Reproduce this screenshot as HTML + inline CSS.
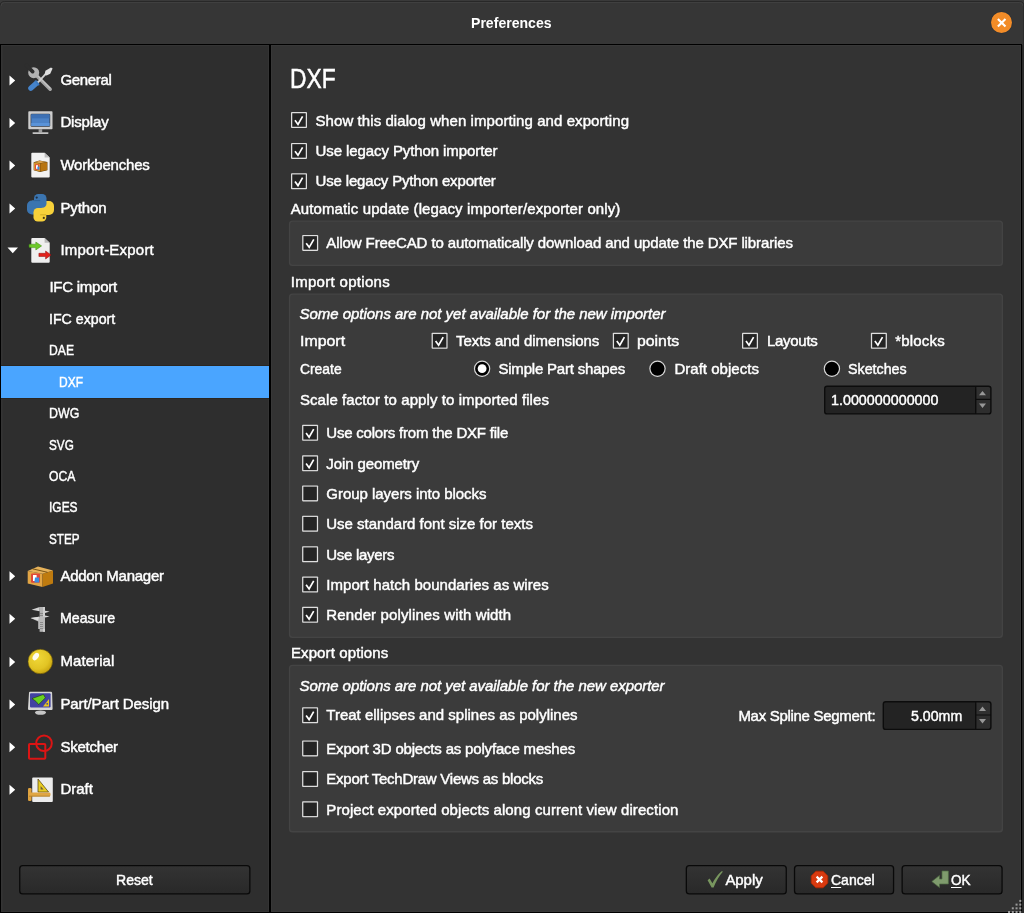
<!DOCTYPE html>
<html lang="en">
<head>
<meta charset="utf-8">
<title>Preferences</title>
<style>
*{box-sizing:border-box;margin:0;padding:0}
html,body{width:1024px;height:913px;overflow:hidden;background:#363636}
body{position:relative;font-family:"Liberation Sans",sans-serif;font-size:15px;color:#fff}
.abs{position:absolute}
#close{left:990.8px;top:11.7px;width:21.4px;height:21.4px;border-radius:50%;background:#f28c28;box-shadow:0 0 0 0.6px #2a3038}
#hline{left:0;top:44px;width:1022px;height:1px;background:#000}
#left{left:0;top:45px;width:269px;height:868px;background:#2e2e2e;border-left:1px solid #000;border-bottom:1px solid #000;box-shadow:inset 0 0 0 1px #343434}
#divider{left:269px;top:44px;width:2px;height:869px;background:#000}
#right{left:271px;top:45px;width:750px;height:868px;background:#333333;border-bottom:1px solid #000;box-shadow:inset 0 0 0 1px #383838}
#rline{left:1021px;top:44px;width:1px;height:869px;background:#000}
#sel{left:1px;top:366px;width:268px;height:32px;background:#4aa5ff;box-shadow:0 -1px 0 #2a2621,0 1px 0 #2a2621}
.t{position:absolute;white-space:nowrap;height:20px;line-height:20px;font-size:15px;transform-origin:0 50%;-webkit-text-stroke:0.45px #fff}
.t.h{height:34px;line-height:34px;font-size:27px;-webkit-text-stroke:0.5px #fff}
.t.b{font-weight:bold;-webkit-text-stroke:0}
.t u{text-decoration:underline;text-underline-offset:2px;text-decoration-thickness:1.3px}
.ic{position:absolute;left:24px;display:block}
#tx{position:absolute;left:0;top:0;width:1024px;height:913px;will-change:transform}
i{font-style:italic}
</style>
</head>
<body>
<svg class="abs" style="left:0;top:0" width="1024" height="8" viewBox="0 0 1024 8"><rect width="1024" height="8" fill="#3a3a3a"/><path d="M0 8V6Q0 1.5 4.5 1.5H1019.5Q1024 1.5 1024 6V8Z" fill="#363636"/><path d="M0 6Q0 1.5 4.5 1.5H1019.5Q1024 1.5 1024 6" fill="none" stroke="#282828" stroke-width="1"/><path d="M1 6Q1 2.6 4.5 2.6H1019.5Q1023 2.6 1023 6" fill="none" stroke="#424242" stroke-width="1"/></svg>
<div class="abs" id="close"><svg width="21.4" height="21.4" viewBox="0 0 21.4 21.4" style="display:block"><path d="M6.9 6.9L14.5 14.5M14.5 6.9L6.9 14.5" stroke="#fff" stroke-width="2.1" stroke-linecap="butt"/></svg></div>
<div class="abs" id="hline"></div>
<div class="abs" id="left"></div>
<div class="abs" id="divider"></div><div class="abs" style="left:2px;top:46px;width:1px;height:865px;background:#313131"></div>
<div class="abs" id="right"></div>
<div class="abs" id="rline"></div><div class="abs" style="left:1022px;top:45px;width:2px;height:868px;background:#2b2b2b"></div><div class="abs" style="left:1023px;top:4px;width:1px;height:41px;background:#2b2b2b"></div>
<div class="abs" id="sel"></div>
<svg class="abs" style="left:288px;top:664px" width="716" height="170" viewBox="0 0 716 170"><g transform="translate(0.9 0.8)"><rect width="714.1" height="167.6" rx="3.5" fill="#444444"/><rect x="1.3" y="1.3" width="711.5" height="165" rx="2.4" fill="#3b3b3b"/></g></svg>
<svg class="abs" style="left:288px;top:293px" width="716" height="346" viewBox="0 0 716 346"><g transform="translate(0.9 0.4)"><rect width="714.1" height="344.6" rx="3.5" fill="#444444"/><rect x="1.3" y="1.3" width="711.5" height="342" rx="2.4" fill="#3b3b3b"/></g></svg>
<svg class="abs" style="left:288px;top:220px" width="716" height="48" viewBox="0 0 716 48"><g transform="translate(0.9 0.4)"><rect width="714.1" height="45.7" rx="3.5" fill="#444444"/><rect x="1.3" y="1.3" width="711.5" height="43.1" rx="2.4" fill="#3b3b3b"/></g></svg>
<svg class="abs" style="left:291px;top:112px" width="18" height="18" viewBox="0 0 18 18"><g transform="translate(0 0)"><rect width="16" height="16" rx="0.8" fill="#dedede"/><rect x="1.25" y="1.25" width="13.5" height="13.5" fill="#242424"/><path d="M4 8.3L7 12.4L11.6 4.4" fill="none" stroke="#fff" stroke-width="1.7"/></g></svg>
<svg class="abs" style="left:291px;top:142px" width="18" height="18" viewBox="0 0 18 18"><g transform="translate(0 0.9)"><rect width="16" height="16" rx="0.8" fill="#dedede"/><rect x="1.25" y="1.25" width="13.5" height="13.5" fill="#242424"/><path d="M4 8.3L7 12.4L11.6 4.4" fill="none" stroke="#fff" stroke-width="1.7"/></g></svg>
<svg class="abs" style="left:291px;top:173px" width="18" height="18" viewBox="0 0 18 18"><g transform="translate(0 0.2)"><rect width="16" height="16" rx="0.8" fill="#dedede"/><rect x="1.25" y="1.25" width="13.5" height="13.5" fill="#242424"/><path d="M4 8.3L7 12.4L11.6 4.4" fill="none" stroke="#fff" stroke-width="1.7"/></g></svg>
<svg class="abs" style="left:302px;top:234px" width="18" height="18" viewBox="0 0 18 18"><g transform="translate(0.2 0.9)"><rect width="16" height="16" rx="0.8" fill="#dedede"/><rect x="1.25" y="1.25" width="13.5" height="13.5" fill="#242424"/><path d="M4 8.3L7 12.4L11.6 4.4" fill="none" stroke="#fff" stroke-width="1.7"/></g></svg>
<svg class="abs" style="left:431px;top:332px" width="18" height="18" viewBox="0 0 18 18"><g transform="translate(0.6 0.8)"><rect width="16" height="16" rx="0.8" fill="#dedede"/><rect x="1.25" y="1.25" width="13.5" height="13.5" fill="#242424"/><path d="M4 8.3L7 12.4L11.6 4.4" fill="none" stroke="#fff" stroke-width="1.7"/></g></svg>
<svg class="abs" style="left:612px;top:332px" width="18" height="18" viewBox="0 0 18 18"><g transform="translate(0.8 0.8)"><rect width="16" height="16" rx="0.8" fill="#dedede"/><rect x="1.25" y="1.25" width="13.5" height="13.5" fill="#242424"/><path d="M4 8.3L7 12.4L11.6 4.4" fill="none" stroke="#fff" stroke-width="1.7"/></g></svg>
<svg class="abs" style="left:742px;top:332px" width="18" height="18" viewBox="0 0 18 18"><g transform="translate(0 0.8)"><rect width="16" height="16" rx="0.8" fill="#dedede"/><rect x="1.25" y="1.25" width="13.5" height="13.5" fill="#242424"/><path d="M4 8.3L7 12.4L11.6 4.4" fill="none" stroke="#fff" stroke-width="1.7"/></g></svg>
<svg class="abs" style="left:870px;top:332px" width="18" height="18" viewBox="0 0 18 18"><g transform="translate(0.9 0.8)"><rect width="16" height="16" rx="0.8" fill="#dedede"/><rect x="1.25" y="1.25" width="13.5" height="13.5" fill="#242424"/><path d="M4 8.3L7 12.4L11.6 4.4" fill="none" stroke="#fff" stroke-width="1.7"/></g></svg>
<svg class="abs" style="left:302px;top:424px" width="18" height="18" viewBox="0 0 18 18"><g transform="translate(0.1 0.8)"><rect width="16" height="16" rx="0.8" fill="#dedede"/><rect x="1.25" y="1.25" width="13.5" height="13.5" fill="#242424"/><path d="M4 8.3L7 12.4L11.6 4.4" fill="none" stroke="#fff" stroke-width="1.7"/></g></svg>
<svg class="abs" style="left:302px;top:455px" width="18" height="18" viewBox="0 0 18 18"><g transform="translate(0.1 0.3)"><rect width="16" height="16" rx="0.8" fill="#dedede"/><rect x="1.25" y="1.25" width="13.5" height="13.5" fill="#242424"/><path d="M4 8.3L7 12.4L11.6 4.4" fill="none" stroke="#fff" stroke-width="1.7"/></g></svg>
<svg class="abs" style="left:302px;top:485px" width="18" height="18" viewBox="0 0 18 18"><g transform="translate(0.1 0.4)"><rect width="16" height="16" rx="0.8" fill="#dedede"/><rect x="1.25" y="1.25" width="13.5" height="13.5" fill="#242424"/></g></svg>
<svg class="abs" style="left:302px;top:515px" width="18" height="18" viewBox="0 0 18 18"><g transform="translate(0.1 0.7)"><rect width="16" height="16" rx="0.8" fill="#dedede"/><rect x="1.25" y="1.25" width="13.5" height="13.5" fill="#242424"/></g></svg>
<svg class="abs" style="left:302px;top:546px" width="18" height="18" viewBox="0 0 18 18"><g transform="translate(0.1 0.2)"><rect width="16" height="16" rx="0.8" fill="#dedede"/><rect x="1.25" y="1.25" width="13.5" height="13.5" fill="#242424"/></g></svg>
<svg class="abs" style="left:302px;top:576px" width="18" height="18" viewBox="0 0 18 18"><g transform="translate(0.1 0.5)"><rect width="16" height="16" rx="0.8" fill="#dedede"/><rect x="1.25" y="1.25" width="13.5" height="13.5" fill="#242424"/><path d="M4 8.3L7 12.4L11.6 4.4" fill="none" stroke="#fff" stroke-width="1.7"/></g></svg>
<svg class="abs" style="left:302px;top:606px" width="18" height="18" viewBox="0 0 18 18"><g transform="translate(0.1 0.8)"><rect width="16" height="16" rx="0.8" fill="#dedede"/><rect x="1.25" y="1.25" width="13.5" height="13.5" fill="#242424"/><path d="M4 8.3L7 12.4L11.6 4.4" fill="none" stroke="#fff" stroke-width="1.7"/></g></svg>
<svg class="abs" style="left:302px;top:707px" width="18" height="18" viewBox="0 0 18 18"><g transform="translate(0.1 0.2)"><rect width="16" height="16" rx="0.8" fill="#dedede"/><rect x="1.25" y="1.25" width="13.5" height="13.5" fill="#242424"/><path d="M4 8.3L7 12.4L11.6 4.4" fill="none" stroke="#fff" stroke-width="1.7"/></g></svg>
<svg class="abs" style="left:302px;top:740px" width="18" height="18" viewBox="0 0 18 18"><g transform="translate(0.1 0.4)"><rect width="16" height="16" rx="0.8" fill="#dedede"/><rect x="1.25" y="1.25" width="13.5" height="13.5" fill="#242424"/></g></svg>
<svg class="abs" style="left:302px;top:771px" width="18" height="18" viewBox="0 0 18 18"><g transform="translate(0.1 0)"><rect width="16" height="16" rx="0.8" fill="#dedede"/><rect x="1.25" y="1.25" width="13.5" height="13.5" fill="#242424"/></g></svg>
<svg class="abs" style="left:302px;top:801px" width="18" height="18" viewBox="0 0 18 18"><g transform="translate(0.1 0.3)"><rect width="16" height="16" rx="0.8" fill="#dedede"/><rect x="1.25" y="1.25" width="13.5" height="13.5" fill="#242424"/></g></svg>
<svg class="abs" style="left:473px;top:359px" width="19" height="19" viewBox="0 0 19 19"><circle cx="9.1" cy="9.7" r="8.2" fill="#d8d8d8"/><circle cx="9.1" cy="9.7" r="7" fill="#000"/><circle cx="9.1" cy="9.7" r="4.4" fill="#fff"/></svg>
<svg class="abs" style="left:648px;top:359px" width="19" height="19" viewBox="0 0 19 19"><circle cx="9.5" cy="9.7" r="8.2" fill="#d8d8d8"/><circle cx="9.5" cy="9.7" r="7" fill="#000"/></svg>
<svg class="abs" style="left:822px;top:359px" width="19" height="19" viewBox="0 0 19 19"><circle cx="9.9" cy="9.7" r="8.2" fill="#d8d8d8"/><circle cx="9.9" cy="9.7" r="7" fill="#000"/></svg>
<svg class="abs" style="left:824px;top:385px" width="169" height="31" viewBox="0 0 169 31"><g transform="translate(0 0.5)"><rect x="0" y="0" width="167.6" height="29.1" rx="3.2" fill="#0c0c0c"/><path d="M3 1.4H151.1V27.7H3Q1.4 27.7 1.4 26.1V3Q1.4 1.4 3 1.4Z" fill="#232323"/><path d="M152.4 1.4H164.6Q166.2 1.4 166.2 3V13.3H152.4Z" fill="#303030"/><path d="M152.4 14.5H166.2V26.1Q166.2 27.7 164.6 27.7H152.4Z" fill="#2e2e2e"/><path d="M155 9.8L158.5 5.5L162 9.8Z M155 18L158.5 22.4L162 18Z" fill="#979797"/></g></svg>
<svg class="abs" style="left:882px;top:701px" width="111" height="31" viewBox="0 0 111 31"><g transform="translate(0.6 0.1)"><rect x="0" y="0" width="109" height="29" rx="3.2" fill="#0c0c0c"/><path d="M3 1.4H92.5V27.6H3Q1.4 27.6 1.4 26V3Q1.4 1.4 3 1.4Z" fill="#232323"/><path d="M93.8 1.4H106Q107.6 1.4 107.6 3V13.3H93.8Z" fill="#303030"/><path d="M93.8 14.5H107.6V26Q107.6 27.6 106 27.6H93.8Z" fill="#2e2e2e"/><path d="M96.4 9.8L99.9 5.5L103.4 9.8Z M96.4 18L99.9 22.4L103.4 18Z" fill="#979797"/></g></svg>
<svg width="0" height="0" style="position:absolute"><defs><linearGradient id="bg" x1="0" y1="0" x2="0" y2="1"><stop offset="0" stop-color="#333333"/><stop offset="1" stop-color="#292929"/></linearGradient></defs></svg>
<svg class="abs" style="left:19px;top:865px" width="233" height="31" viewBox="0 0 233 31"><g transform="translate(0.1 0)"><rect x="0" y="0" width="231.4" height="29.6" rx="3.6" fill="#090909"/><rect x="1.3" y="1.3" width="228.8" height="27" rx="2.4" fill="url(#bg)"/></g></svg>
<svg class="abs" style="left:685px;top:865px" width="103" height="31" viewBox="0 0 103 31"><g transform="translate(0.7 0)"><rect x="0" y="0" width="101.2" height="29.6" rx="3.6" fill="#090909"/><rect x="1.3" y="1.3" width="98.6" height="27" rx="2.4" fill="url(#bg)"/></g></svg>
<svg class="abs" style="left:793px;top:865px" width="103" height="31" viewBox="0 0 103 31"><g transform="translate(0.9 0)"><rect x="0" y="0" width="100.3" height="29.6" rx="3.6" fill="#090909"/><rect x="1.3" y="1.3" width="97.7" height="27" rx="2.4" fill="url(#bg)"/></g></svg>
<svg class="abs" style="left:901px;top:865px" width="103" height="31" viewBox="0 0 103 31"><g transform="translate(0.5 0)"><rect x="0" y="0" width="101.2" height="29.6" rx="3.6" fill="#090909"/><rect x="1.3" y="1.3" width="98.6" height="27" rx="2.4" fill="url(#bg)"/></g></svg>
<svg class="abs" style="left:0;top:0" width="24" height="913" viewBox="0 0 24 913"><path d="M9.5 75.4L15.2 80.4L9.5 85.4Z M9.5 117.9L15.2 122.9L9.5 127.9Z M9.5 160.5L15.2 165.5L9.5 170.5Z M9.5 203.4L15.2 208.4L9.5 213.4Z M9.5 571.3L15.2 576.3L9.5 581.3Z M9.5 613.8L15.2 618.8L9.5 623.8Z M9.5 656.9L15.2 661.9L9.5 666.9Z M9.5 699.5L15.2 704.5L9.5 709.5Z M9.5 742.3L15.2 747.3L9.5 752.3Z M9.5 784.8L15.2 789.8L9.5 794.8Z M7.5 247.4H18L12.75 253.3Z" fill="#fff"/></svg>
<svg class="abs" style="left:706px;top:869px" width="20" height="20" viewBox="0 0 20 20"><path d="M1.6 11.2L3.6 9.6L6.4 14.2Q10.5 6.5 15.6 2.2L17 2.6Q11.5 9 7.6 18.4L5.6 18.6Z" fill="#78965f"/></svg>
<svg class="abs" style="left:810px;top:870px" width="19" height="19" viewBox="0 0 19 19"><path d="M5.9 1.2H13.1L17.8 5.9V13.1L13.1 17.8H5.9L1.2 13.1V5.9Z" fill="#d83a10" stroke="#b02800" stroke-width="0.8"/><path d="M6.6 6.6L12.4 12.4M12.4 6.6L6.6 12.4" stroke="#fff" stroke-width="2.2"/></svg>
<svg class="abs" style="left:930px;top:869px" width="20" height="20" viewBox="0 0 20 20"><path d="M12 2H18.4V15H9.5V18.6L1.8 12.5L9.5 6.4V10H12Z" fill="#7f9b6d" stroke="#4f6a44" stroke-width="0.7"/></svg>
<svg class="abs" style="left:1006px;top:897px" width="16" height="16" viewBox="0 0 16 16"><rect x="13.3" y="14" width="2" height="2" fill="#9a9a9a"/><rect x="9.55" y="14" width="2" height="2" fill="#9a9a9a"/><rect x="5.8" y="14" width="2" height="2" fill="#9a9a9a"/><rect x="2.05" y="14" width="2" height="2" fill="#9a9a9a"/><rect x="13.3" y="10.3" width="2" height="2" fill="#9a9a9a"/><rect x="9.55" y="10.3" width="2" height="2" fill="#9a9a9a"/><rect x="5.8" y="10.3" width="2" height="2" fill="#9a9a9a"/><rect x="13.3" y="6.6" width="2" height="2" fill="#9a9a9a"/><rect x="9.55" y="6.6" width="2" height="2" fill="#9a9a9a"/><rect x="13.3" y="2.9" width="2" height="2" fill="#9a9a9a"/></svg>
<svg class="ic" style="top:62px" width="32" height="34" viewBox="0 0 32 34"><path d="M11.4 12.4L26.2 27.2" stroke="#a6a6a6" stroke-width="3.5" stroke-linecap="round"/><path d="M12.4 12.6L26 26.2" stroke="#c6c6c6" stroke-width="1.1" stroke-linecap="round"/><circle cx="9.7" cy="10.7" r="5.5" fill="#b2b2b2"/><path d="M8.6 9.6L2.5 3.5" stroke="#2e2e2e" stroke-width="3.7" stroke-linecap="round"/><path d="M6.8 26.2L12.4 21.2" stroke="#4584cc" stroke-width="5.2" stroke-linecap="round"/><path d="M11 18.6L15.2 23.2" stroke="#3a78c0" stroke-width="1.4"/><path d="M14 20.4L22 11.6" stroke="#d0d0d0" stroke-width="1.9"/><path d="M20.6 12.8L21.4 8.8L27 5.4L28.6 6.4L26.2 11.8L22.6 13.6Z" fill="#dedede"/></svg>
<svg class="ic" style="top:105px" width="32" height="34" viewBox="0 0 32 34"><rect x="4.3" y="6.3" width="24.2" height="17.9" rx="0.8" fill="#cdcdcd"/><rect x="6.6" y="8.7" width="19.6" height="13" rx="1.2" fill="#303a48"/><rect x="7.3" y="9.4" width="18.2" height="11.6" fill="#4c82c6"/><rect x="7.3" y="9.4" width="18.2" height="4" fill="#3d70b4"/><rect x="7.3" y="18" width="18.2" height="3" fill="#5a93d8"/><rect x="14.6" y="24.2" width="3.6" height="3.2" fill="#9e9e9e"/><rect x="8.4" y="27.2" width="16.2" height="1.7" rx="0.8" fill="#c4c4c4"/></svg>
<svg class="ic" style="top:147px" width="32" height="34" viewBox="0 0 32 34"><path d="M8.3 5.8H20.6L25.7 10.6V29.5Q25.7 30.5 24.7 30.5H8.3Q7.3 30.5 7.3 29.5V6.8Q7.3 5.8 8.3 5.8Z" fill="#f2f2f2"/><path d="M20.6 5.8V10.6H25.7Z" fill="#bdbdbd"/><path d="M9.7 15.2L15.5 13.4L23.4 15V23.2L16 25L9.7 23.2Z" fill="#5a3a08"/><path d="M9.9 15.4L16 16.6V24.6L9.9 23Z" fill="#d8962e"/><path d="M16.3 16.6L23.1 15.2V22.9L16.3 24.6Z" fill="#b87510"/><path d="M10.3 15.2L15.5 13.8L22.6 15L16.1 16.3Z" fill="#d9a04a"/><rect x="11" y="17.4" width="4.2" height="5.4" fill="#e04b3a"/><rect x="12" y="18.2" width="2" height="3.6" fill="#fff"/><rect x="13.4" y="19.6" width="2" height="3" fill="#3a8ee0"/></svg>
<svg class="ic" style="top:190px" width="32" height="34" viewBox="0 0 32 34"><rect x="3" y="10.5" width="13.5" height="14" rx="5" fill="#3b75b0"/><rect x="17" y="11" width="13" height="14" rx="5" fill="#f7d13a"/><rect x="9.5" y="18" width="12.8" height="13.5" rx="4.3" fill="#f7d13a"/><rect x="14" y="18" width="11" height="7" fill="#f7d13a"/><rect x="10" y="4" width="12.5" height="13.7" rx="4.3" fill="#3b75b0"/><rect x="8" y="10.5" width="10" height="7.2" fill="#3b75b0"/><circle cx="12.7" cy="7.6" r="1.1" fill="#1d2f44"/><circle cx="19.8" cy="27.9" r="1.1" fill="#4a3a10"/><path d="M10.2 10.6H16.2" stroke="#2b5c90" stroke-width="0.8"/><path d="M16.2 24.8H22.2" stroke="#c9a21c" stroke-width="0.8"/></svg>
<svg class="ic" style="top:233px" width="32" height="34" viewBox="0 0 32 34"><path d="M8.3 5H20.6L25.7 9.8V28.8Q25.7 29.8 24.7 29.8H8.3Q7.3 29.8 7.3 28.8V6Q7.3 5 8.3 5Z" fill="#efefef"/><path d="M20.6 5V9.8H25.7Z" fill="#b8b8b8"/><path d="M5.4 11.2H11.8V9L17.6 12.9L11.8 17V14.6H5.4Q4.6 12.9 5.4 11.2Z" fill="#6cc828" stroke="#3f8a12" stroke-width="0.5"/><path d="M14.9 20.3H21.6V18L27.1 21.9L21.6 26V23.5H14.9Z" fill="#e2211c" stroke="#8f0f0c" stroke-width="0.5"/></svg>
<svg class="ic" style="top:559px" width="32" height="34" viewBox="0 0 32 34"><path d="M3.7 12L18.5 14.8V28L3.7 24.5Z" fill="#e2a545"/><path d="M18.5 14.8L29 11.6V24.4L18.5 28Z" fill="#bf7b0f"/><path d="M3.7 12L14 7.5L29 11.6L18.5 14.8Z" fill="#e6b25a"/><path d="M8.5 9.8L23.5 13.3" stroke="#6b4a10" stroke-width="0.9"/><rect x="7" y="14.4" width="9" height="9.4" rx="1" fill="#e0483a"/><rect x="9" y="16" width="3.6" height="6" fill="#fff"/><path d="M11 18.4H15.2V23.6H10.4Z" fill="#3a8ee0"/></svg>
<svg class="ic" style="top:602px" width="32" height="34" viewBox="0 0 32 34"><rect x="15.6" y="5" width="5.4" height="24.8" fill="#b4b4b4"/><rect x="19" y="5" width="2" height="24.8" fill="#cfcfcf"/><path d="M15.6 5L7.6 7.8L15.6 9.2Z" fill="#d4d4d4"/><path d="M15 14.8L6.6 16L14.2 19.4V27H21V14.8Z" fill="#b9b9b9"/><path d="M15 14.8L6.6 16L14.2 18.4Z" fill="#dedede"/><path d="M21 8.8L25.6 9.6L21 11Z M21 13.6L25.6 14.4L21 15.6Z" fill="#d4d4d4"/><path d="M16 11.5H19M16 13.5H19M16 20.5H19M16 22.5H19M16 24.5H19M16 26.5H19" stroke="#777" stroke-width="0.7"/></svg>
<svg class="ic" style="top:645px" width="32" height="34" viewBox="0 0 32 34"><defs><radialGradient id="gm" cx="0.4" cy="0.35" r="0.75"><stop offset="0" stop-color="#f0d838"/><stop offset="0.6" stop-color="#e2c424"/><stop offset="1" stop-color="#c09a08"/></radialGradient></defs><circle cx="16.3" cy="16.5" r="12.3" fill="url(#gm)" stroke="#5a4a08" stroke-width="0.6"/><ellipse cx="11.8" cy="11.6" rx="2.6" ry="4.2" transform="rotate(35 11.8 11.6)" fill="#fff" opacity="0.92"/></svg>
<svg class="ic" style="top:687px" width="32" height="34" viewBox="0 0 32 34"><ellipse cx="16.5" cy="25.6" rx="5.6" ry="2.2" fill="#c6c6c6"/><path d="M6 4.7H27Q28 4.7 28.1 5.7L28.6 21.8Q28.6 23 27.6 23H5Q4 23 4 21.8L5 5.7Q5 4.7 6 4.7Z" fill="#d6d6d6"/><rect x="6" y="6.2" width="20.6" height="14.4" rx="1" fill="#4242a2"/><path d="M8 11.6L19.4 7.4L21.4 10.8L14.6 17.6L12 14.4Z" fill="#6ad220" stroke="#1c3a08" stroke-width="0.6"/><path d="M25 12V19.5H19Z" fill="#e8c41e"/><circle cx="23.2" cy="16.8" r="0.9" fill="#4242a2"/></svg>
<svg class="ic" style="top:730px" width="32" height="34" viewBox="0 0 32 34"><rect x="5" y="14" width="16.3" height="14.8" rx="0.8" fill="none" stroke="#dc1414" stroke-width="2"/><circle cx="20" cy="13.2" r="7.8" fill="none" stroke="#dc1414" stroke-width="2"/></svg>
<svg class="ic" style="top:773px" width="32" height="34" viewBox="0 0 32 34"><rect x="8.2" y="4.5" width="20.6" height="24.5" rx="1" fill="#ececec"/><path d="M14 6V19H24.6Z" fill="#e8cc22" stroke="#4a3a08" stroke-width="0.7"/><path d="M16.6 13V16.6H19.6Z" fill="#6b5a3a"/><rect x="4" y="15" width="3.6" height="13" rx="1.2" fill="#dfa23e"/><rect x="4.5" y="19.6" width="22" height="3.8" rx="1.4" fill="#e0a644"/><path d="M5 23.2H26" stroke="#9a6a18" stroke-width="0.6"/></svg>

<div id="tx">
<div class="t b" style="left:470.65px;top:13.00px;transform:scaleX(0.9382);">Preferences</div>
<div class="t" style="left:60.40px;top:70.00px;letter-spacing:-0.311px;">General</div>
<div class="t" style="left:60.40px;top:112.00px;letter-spacing:-0.155px;">Display</div>
<div class="t" style="left:60.40px;top:155.00px;letter-spacing:-0.203px;">Workbenches</div>
<div class="t" style="left:60.40px;top:198.00px;letter-spacing:-0.084px;">Python</div>
<div class="t" style="left:60.40px;top:240.00px;letter-spacing:0.211px;">Import-Export</div>
<div class="t" style="left:49.40px;top:277.00px;letter-spacing:-0.242px;">IFC import</div>
<div class="t" style="left:49.40px;top:309.00px;transform:scaleX(0.9453);">IFC export</div>
<div class="t" style="left:49.40px;top:340.00px;transform:scaleX(0.8105);">DAE</div>
<div class="t" style="left:58.60px;top:372.00px;transform:scaleX(0.8000);">DXF</div>
<div class="t" style="left:49.40px;top:403.00px;transform:scaleX(0.8262);">DWG</div>
<div class="t" style="left:49.40px;top:435.00px;transform:scaleX(0.7826);">SVG</div>
<div class="t" style="left:49.40px;top:466.00px;transform:scaleX(0.8119);">OCA</div>
<div class="t" style="left:49.40px;top:497.00px;transform:scaleX(0.7976);">IGES</div>
<div class="t" style="left:49.40px;top:529.00px;transform:scaleX(0.7809);">STEP</div>
<div class="t" style="left:60.40px;top:566.00px;letter-spacing:-0.265px;">Addon Manager</div>
<div class="t" style="left:60.40px;top:608.00px;transform:scaleX(0.9459);">Measure</div>
<div class="t" style="left:60.40px;top:651.00px;letter-spacing:0.093px;">Material</div>
<div class="t" style="left:60.40px;top:694.00px;letter-spacing:-0.090px;">Part/Part Design</div>
<div class="t" style="left:60.40px;top:737.00px;letter-spacing:-0.225px;">Sketcher</div>
<div class="t" style="left:60.40px;top:779.00px;letter-spacing:0.017px;">Draft</div>
<div class="t" style="left:116.40px;top:870.00px;transform:scaleX(0.9365);">Reset</div>
<div class="t h" style="left:289.90px;top:62.00px;transform:scaleX(0.8444);">DXF</div>
<div class="t" style="left:315.50px;top:111.00px;letter-spacing:0.075px;">Show this dialog when importing and exporting</div>
<div class="t" style="left:315.50px;top:141.00px;letter-spacing:-0.090px;">Use legacy Python importer</div>
<div class="t" style="left:315.50px;top:171.00px;letter-spacing:-0.156px;">Use legacy Python exporter</div>
<div class="t" style="left:290.70px;top:199.00px;letter-spacing:0.114px;">Automatic update (legacy importer/exporter only)</div>
<div class="t" style="left:326.30px;top:233.00px;letter-spacing:-0.115px;">Allow FreeCAD to automatically download and update the DXF libraries</div>
<div class="t" style="left:290.70px;top:272.00px;letter-spacing:0.304px;">Import options</div>
<div class="t" style="left:299.50px;top:304.00px;letter-spacing:-0.031px;"><i>Some options are not yet available for the new importer</i></div>
<div class="t" style="left:299.90px;top:331.00px;transform:scaleX(1.0608);">Import</div>
<div class="t" style="left:456.00px;top:331.00px;letter-spacing:-0.048px;">Texts and dimensions</div>
<div class="t" style="left:636.80px;top:331.00px;transform:scaleX(1.0542);">points</div>
<div class="t" style="left:766.90px;top:331.00px;letter-spacing:-0.264px;">Layouts</div>
<div class="t" style="left:895.20px;top:331.00px;letter-spacing:0.206px;">*blocks</div>
<div class="t" style="left:299.90px;top:359.00px;transform:scaleX(0.9238);">Create</div>
<div class="t" style="left:498.40px;top:359.00px;letter-spacing:-0.193px;">Simple Part shapes</div>
<div class="t" style="left:674.40px;top:359.00px;letter-spacing:0.031px;">Draft objects</div>
<div class="t" style="left:848.30px;top:359.00px;transform:scaleX(0.9513);">Sketches</div>
<div class="t" style="left:299.90px;top:390.00px;letter-spacing:0.080px;">Scale factor to apply to imported files</div>
<div class="t" style="left:831.40px;top:390.00px;transform:scaleX(0.9545);">1.000000000000</div>
<div class="t" style="left:326.30px;top:423.00px;letter-spacing:-0.206px;">Use colors from the DXF file</div>
<div class="t" style="left:326.30px;top:454.00px;letter-spacing:-0.109px;">Join geometry</div>
<div class="t" style="left:326.30px;top:484.00px;letter-spacing:-0.029px;">Group layers into blocks</div>
<div class="t" style="left:326.30px;top:514.00px;letter-spacing:-0.005px;">Use standard font size for texts</div>
<div class="t" style="left:326.30px;top:545.00px;letter-spacing:-0.286px;">Use layers</div>
<div class="t" style="left:326.30px;top:575.00px;letter-spacing:0.045px;">Import hatch boundaries as wires</div>
<div class="t" style="left:326.30px;top:605.00px;letter-spacing:0.120px;">Render polylines with width</div>
<div class="t" style="left:290.90px;top:643.00px;letter-spacing:0.115px;">Export options</div>
<div class="t" style="left:299.50px;top:676.00px;letter-spacing:-0.049px;"><i>Some options are not yet available for the new exporter</i></div>
<div class="t" style="left:326.30px;top:705.00px;letter-spacing:-0.001px;">Treat ellipses and splines as polylines</div>
<div class="t" style="left:738.40px;top:706.00px;letter-spacing:-0.299px;">Max Spline Segment:</div>
<div class="t" style="left:911.40px;top:706.00px;transform:scaleX(0.9449);">5.00mm</div>
<div class="t" style="left:326.30px;top:739.00px;letter-spacing:-0.178px;">Export 3D objects as polyface meshes</div>
<div class="t" style="left:326.30px;top:769.00px;letter-spacing:-0.253px;">Export TechDraw Views as blocks</div>
<div class="t" style="left:326.30px;top:800.00px;letter-spacing:0.085px;">Project exported objects along current view direction</div>
<div class="t" style="left:725.40px;top:870.00px;letter-spacing:-0.066px;">Apply</div>
<div class="t" style="left:830.80px;top:870.00px;transform:scaleX(0.9336);"><u>C</u>ancel</div>
<div class="t" style="left:950.80px;top:870.00px;transform:scaleX(0.9037);"><u>O</u>K</div>
</div>
</body>
</html>
